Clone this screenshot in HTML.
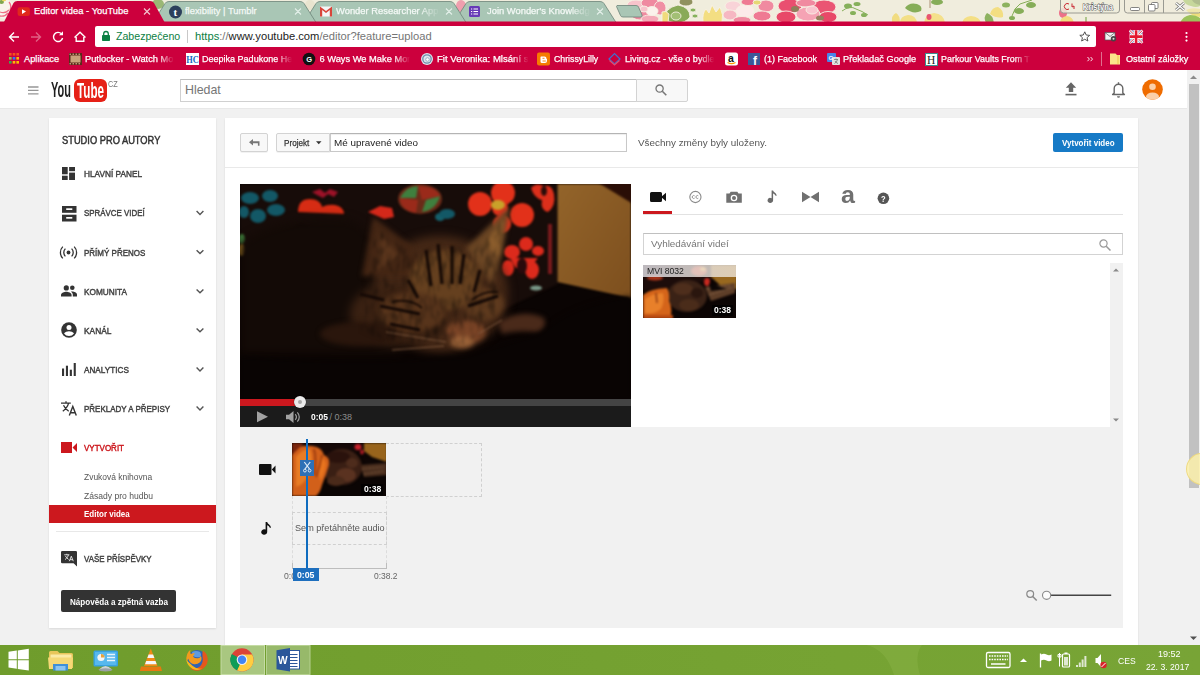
<!DOCTYPE html>
<html lang="cs"><head><meta charset="utf-8"><title>Editor videa - YouTube</title>
<style>
*{box-sizing:border-box;margin:0;padding:0}
html,body{width:1200px;height:675px;overflow:hidden;background:#f1f1f1}
body{font-family:"Liberation Sans","DejaVu Sans",sans-serif;position:relative;color:#333}
.abs{position:absolute}
svg{display:block;overflow:visible}
#chrome{left:0;top:0;width:1200px;height:70px;background:#cc003d;overflow:hidden}
.tabtxt{position:absolute;top:0;font-size:9.4px;line-height:21px;color:#fff;white-space:nowrap;overflow:hidden;-webkit-text-stroke:.25px currentColor}
.fade{-webkit-mask-image:linear-gradient(90deg,#000 80%,transparent);mask-image:linear-gradient(90deg,#000 80%,transparent)}
#omni{left:95px;top:26px;width:1001px;height:21px;background:#fff;border-radius:2px}
.bm{position:absolute;top:50px;height:17px;line-height:17px;font-size:9.2px;color:#fff;white-space:nowrap;overflow:hidden;-webkit-text-stroke:.25px #fff}
#page{left:0;top:70px;width:1187px;height:575px;background:#f1f1f1;overflow:hidden}
#ythead{left:0;top:0;width:1187px;height:39px;background:#fff;border-bottom:1px solid #e8e8e8}
#side{left:49px;top:48px;width:167px;height:509.5px;background:#fff;box-shadow:0 1px 2px rgba(0,0,0,.1)}
#main{left:224.500px;top:47.500px;width:913.500px;height:540px;background:#fff;box-shadow:0 1px 2px rgba(0,0,0,.1)}
#vscroll{left:1187px;top:70px;width:13px;height:575px;background:#f1f1f1}
#taskbar{left:0;top:645px;width:1200px;height:30px;background:#739f31}
.t{position:absolute;white-space:nowrap;transform-origin:0 50%}
.btn{border:1px solid #d3d3d3;background:#f8f8f8;border-radius:2px;box-shadow:0 1px 0 rgba(0,0,0,.05)}

</style></head><body>
<!-- ================= BROWSER CHROME ================= -->
<div id="chrome" class="abs">
<svg class="abs" style="left:0;top:0;overflow:hidden" width="1200" height="23" viewBox="0 0 1200 23">
  <defs><filter id="bl" x="-20%" y="-50%" width="140%" height="200%"><feGaussianBlur stdDeviation="0.6"/></filter></defs>
  <rect width="1200" height="23" fill="#f0eddd"/>
  <g filter="url(#bl)">
   <!-- left corner flower -->
   <ellipse cx="5" cy="9" rx="9" ry="10" fill="#f8f4ec"/><path d="M9 2q3 4 1 8M0 12q5 2 9-2M0 16q5 1 8-3" fill="none" stroke="#ee6f86" stroke-width="1.300"/><ellipse cx="1.500" cy="2" rx="2.500" ry="2" fill="#7fa650"/><ellipse cx="4" cy=".3" rx="2" ry="1" fill="#f0d860"/>
   <!-- between tabs -->
   <ellipse cx="158" cy="4" rx="6" ry="5" fill="#9ab774"/><ellipse cx="310" cy="5" rx="5" ry="5" fill="#e9e4cf"/><ellipse cx="461" cy="6" rx="5" ry="6" fill="#ef9fae"/>
   <!-- flowers right of tabs -->
   <g stroke="#f7f0e4" stroke-width=".9">
    <!-- pink flower 1 -->
    <ellipse cx="636" cy="5" rx="9" ry="5" fill="#f7c3cb"/><ellipse cx="650" cy="3" rx="9" ry="5" fill="#ef8aa0"/><ellipse cx="640" cy="14" rx="9" ry="6" fill="#ef8aa0"/><ellipse cx="660" cy="8" rx="6" ry="7" fill="#f08fa4"/><ellipse cx="650" cy="19" rx="9" ry="4" fill="#f4a9b7"/><ellipse cx="652" cy="11" rx="6" ry="4.500" fill="#fbf2ec"/><ellipse cx="644" cy="9" rx="4" ry="3" fill="#f7c3cb"/>
    <!-- leaves -->
    <ellipse cx="686" cy="2" rx="7" ry="4" fill="#90915f"/><path d="M664 20q0-12 14-15 12 2 12 12-4 6-14 6z" fill="#89aa59"/><path d="M662 12q4-2 7 2l-1 9h-6z" fill="#f0db7c"/><ellipse cx="676" cy="16" rx="5" ry="4" fill="#a3bf74"/><ellipse cx="693" cy="10" rx="3" ry="2" fill="#86b25c"/><ellipse cx="695" cy="16" rx="3" ry="2" fill="#86b25c"/>
    <!-- yellow tulip -->
    <path d="M703 22q-1-9 3-13l3 4 3-8 4 7 4-5q4 8 2 15z" fill="#f3de82"/>
    <!-- pink flower 2 -->
    <ellipse cx="733" cy="6" rx="8" ry="5" fill="#f9d3d8"/><ellipse cx="730" cy="15" rx="7" ry="5" fill="#f6b7c2"/><ellipse cx="745" cy="11" rx="9" ry="6" fill="#fcebe9"/><ellipse cx="742" cy="20" rx="9" ry="3.500" fill="#f08aa0"/><ellipse cx="748" cy="2" rx="7" ry="3.500" fill="#ef7a93"/><ellipse cx="766" cy="6" rx="8" ry="6" fill="#f08aa0"/><ellipse cx="762" cy="16" rx="9" ry="5" fill="#ef7a93"/><ellipse cx="757" cy="2.500" rx="4" ry="2.500" fill="#e6d874"/>
    <!-- rose -->
    <ellipse cx="790" cy="6" rx="12" ry="7" fill="#e9506f"/><ellipse cx="786" cy="17" rx="10" ry="6" fill="#e84868"/><ellipse cx="824" cy="7" rx="12" ry="7" fill="#ea5473"/><ellipse cx="828" cy="17" rx="9" ry="5.500" fill="#e84868"/><ellipse cx="806" cy="3" rx="10" ry="4" fill="#f08aa0"/><ellipse cx="808" cy="14" rx="12" ry="7" fill="#f5a3b4"/><ellipse cx="812" cy="10" rx="6" ry="4" fill="#f9c6cf"/>
   </g>
   <ellipse cx="795" cy="9" rx="4" ry="3" fill="#8f7f5c"/><ellipse cx="820" cy="18" rx="4" ry="2.500" fill="#96805e"/>
   <!-- sprig -->
   <path d="M842 11q8-6 14-2 6 2 12 6" fill="none" stroke="#86b05a" stroke-width="1"/><ellipse cx="848" cy="6" rx="4" ry="2.500" fill="#86b05a"/><ellipse cx="857" cy="4" rx="3.500" ry="2" fill="#86b05a"/><ellipse cx="853" cy="13" rx="3" ry="2" fill="#86b05a"/><ellipse cx="864" cy="15" rx="3" ry="2" fill="#86b05a"/>
   <path d="M892 23q-1-8 4-10 4 2 4 10z" fill="#f1dc80"/>
   <!-- right side -->
   <path d="M905 8q4-6 12-4 6 2 4 7-8 4-16-3z" fill="#86ad58"/><ellipse cx="937" cy="2" rx="6" ry="3" fill="#86ad58"/><path d="M930 0v8" stroke="#9a7a5a" stroke-width=".8"/>
   <path d="M900 23q0-7 8-8 8 0 9 8z" fill="#f3df86"/><path d="M924 23q1-9 10-10 10 1 11 10z" fill="#f4e08a"/><ellipse cx="929" cy="17" rx="2.500" ry="3" fill="#e8556f"/>
   <path d="M962 23q1-6 9-7 9 1 10 7z" fill="#f4df84"/><path d="M986 23q-3-6 1-10 6 2 7 10z" fill="#8db25f"/><path d="M990 14q2-7 8-7 6 3 5 10-6 2-13-3z" fill="#f3de82"/>
   <path d="M1012 16q2-8 8-12 6-2 12-4" fill="none" stroke="#86ad58" stroke-width="1"/><ellipse cx="1006" cy="5" rx="4" ry="2.500" fill="#8db25f"/><ellipse cx="1019" cy="11" rx="5" ry="3" fill="#86ad58"/><ellipse cx="1031" cy="5" rx="5" ry="3" fill="#86ad58"/><ellipse cx="1012" cy="18" rx="3" ry="2" fill="#86ad58"/>
   <ellipse cx="1063" cy="13" rx="4" ry="5" fill="#ee6f88"/><path d="M1060 23q0-6 7-7 6 1 7 7z" fill="#f2dc80"/><path d="M1086 23v-6" stroke="#86ad58" stroke-width="1.200"/>
   <path d="M1183 0q2 5 8 6 5 2 9 0V0z" fill="#9cc25a"/><path d="M1186 10q6-3 14-1v8q-8 0-14-7z" fill="#efe07c"/><path d="M1180 23q3-7 10-8 6 0 10 3v5z" fill="#9cc25a"/><path d="M1192 0q2 4 8 5V0z" fill="#6f8f3f"/>
  </g>
  <!-- user button + window controls -->
  <rect x="1060.5" y="-3" width="59" height="16" rx="3" fill="#efecdc" fill-opacity=".85" stroke="#9a9a92" stroke-width="1"/>
  <text x="1082.800" y="9.800" font-family="Liberation Sans, sans-serif" font-size="8.600" font-weight="bold" fill="#fff" stroke="#555" stroke-width="1" paint-order="stroke" textLength="30.200" lengthAdjust="spacingAndGlyphs">Kristýna</text>
  <path d="M1069 4a3 3 0 1 0 0 5M1072 3.5v3.5l2-1v3" fill="none" stroke="#c8242f" stroke-width="1"/>
  <rect x="1124.500" y="-3" width="77" height="16" rx="3" fill="#efecdc" fill-opacity=".5" stroke="#9a9a92" stroke-width="1"/>
  <path d="M1144.500 0V13M1163.500 0V13" stroke="#9a9a92" stroke-width="1"/>
  <rect x="1130.500" y="7.500" width="9" height="3" rx="1" fill="#fff" stroke="#666" stroke-width=".8"/>
  <rect x="1151.500" y="2.500" width="6.500" height="6" rx="1" fill="#fff" stroke="#666" stroke-width=".8"/><rect x="1148.500" y="4.500" width="6.500" height="6.500" rx="1" fill="#fff" stroke="#666" stroke-width=".8"/>
  <path d="M1176 3l8 7M1184 3l-8 7" stroke="#666" stroke-width="2.600"/><path d="M1176 3l8 7M1184 3l-8 7" stroke="#fff" stroke-width="1.300"/>
  <!-- inactive tabs -->
  <g stroke="#6c8478" stroke-width=".8" fill="#a9c6b5">
   <path d="M453 24L466 3.500Q467 1.500 470 1.500H600Q603 1.500 604 3.500L617 24"/>
   <path d="M303 24L316 3.500Q317 1.500 320 1.500H450Q453 1.500 454 3.500L467 24"/>
   <path d="M152 24L165 3.500Q166 1.500 169 1.500H300Q303 1.500 304 3.500L317 24"/>
   <path d="M617 5.500H636Q638 5.500 638.500 7L642 15Q642.500 17 641 17H623Q621 17 620.500 15.500L616.500 6.500Z"/>
  </g>
  <rect x="0" y="21.500" width="1200" height="2" fill="#cc003d"/>
  <!-- active tab -->
  <path d="M3.500 23L13.500 3Q14.500 1 17.500 1H150Q153 1 154 3L165 23Z" fill="#cc003d"/>
  <!-- favicons -->
  <rect x="17.600" y="7.200" width="12.300" height="8.800" rx="2.300" fill="#e0281c"/><path d="M22 9.300v4.600l4-2.300z" fill="#fff"/>
  <circle cx="175.500" cy="12" r="6.500" fill="#2c3f5c"/><text x="173.400" y="16" font-family="Liberation Serif, serif" font-weight="bold" font-size="11" fill="#fff">t</text>
  <path d="M320 6.500h12v10h-12z" fill="#f5f5f5"/><path d="M320 6.500v10h2.200v-6.500l3.800 3 3.800-3v6.500H332v-10l-6 4.600z" fill="#d9453a"/>
  <rect x="469" y="6" width="11" height="11" rx="1.500" fill="#673ab7"/><path d="M471 9h1.200M473.500 9h4.500M471 11.500h1.200M473.500 11.500h4.500M471 14h1.200M473.500 14h4.500" stroke="#fff" stroke-width="1.200"/>
  <!-- close x -->
  <g stroke="#f3c9d3" stroke-width="1.100" fill="none"><path d="M144 8.500l6 6M150 8.500l-6 6"/></g>
  <g stroke="#e3efe8" stroke-width="1.100" fill="none"><path d="M295 8.500l6 6M301 8.500l-6 6M446 8.500l6 6M452 8.500l-6 6M597 8.500l6 6M603 8.500l-6 6"/></g>
 </svg>
 <div class="tabtxt" style="left:34px;top:0px;width:108px">Editor videa - YouTube</div>
 <div class="tabtxt" style="left:185px;top:0px;width:108px;color:#f4f9f6">flexibility | Tumblr</div>
 <div class="tabtxt fade" style="left:336px;top:0px;width:104px;color:#f4f9f6">Wonder Researcher Appl</div>
 <div class="tabtxt fade" style="left:487px;top:0px;width:104px;color:#f4f9f6">Join Wonder's Knowledg</div>
  <!-- toolbar -->
 <svg class="abs" style="left:0;top:23px" width="95" height="27" viewBox="0 23 95 27">
  <g fill="none" stroke="#fff" stroke-width="1.4">
   <path d="M19 37H9.500M14 32.500L9.500 37l4.500 4.500"/>
   <path d="M31 37h9.500M36 32.500l4.500 4.500-4.500 4.500" stroke="#e05f83"/>
   <path d="M61.500 33.800A4.600 4.600 0 1 0 62.600 38"/>
   <path d="M74.500 37.500L80 32.300l5.500 5.200M76.200 37v4.300h7.600V37"/>
  </g>
  <path d="M63 31.300v4h-4z" fill="#fff"/>
 </svg>
 <div id="omni" class="abs">
  <svg class="abs" style="left:7px;top:5px" width="8" height="10" viewBox="0 0 8 10"><rect x="0" y="4" width="8" height="6" rx=".8" fill="#0b8043"/><path d="M1.700 4.500V2.800a2.300 2.300 0 0 1 4.600 0v1.700" fill="none" stroke="#0b8043" stroke-width="1.300"/></svg>
  <div class="abs" style="left:21px;top:0;line-height:21px;font-size:10.6px;color:#0b8043;white-space:nowrap">Zabezpečeno</div>
  <div class="abs" style="left:92px;top:4px;width:1px;height:13px;background:#c8c8c8"></div>
  <div class="abs" style="left:100px;top:0;line-height:21px;font-size:11.2px;color:#757575;white-space:nowrap"><span style="color:#0b8043">https</span>://<span style="color:#222">www.youtube.com</span>/editor?feature=upload</div>
  <svg class="abs" style="left:984px;top:5px" width="11.500" height="10.700" viewBox="0 0 14 13"><path d="M7 1l1.800 3.900 4.200.4-3.200 2.800 1 4.100L7 10l-3.800 2.200 1-4.100L1 5.300l4.200-.4z" fill="none" stroke="#444" stroke-width="1.100" stroke-linejoin="round"/></svg>
 </div>
 <!-- extension icons -->
 <svg class="abs" style="left:1103px;top:29px" width="90" height="16" viewBox="1103 29 90 16">
  <rect x="1105" y="32.500" width="10" height="7.500" fill="#f2f2f2" stroke="#555" stroke-width=".7"/><path d="M1105 32.500l5 4 5-4" fill="none" stroke="#555" stroke-width=".7"/><circle cx="1113.500" cy="38.800" r="2.700" fill="#444"/><circle cx="1113.500" cy="38.800" r="1" fill="#ddd"/>
  <rect x="1129.700" y="30.300" width="12.800" height="12.700" fill="#f4f4f8"/><path d="M1129.700 30.300l3 0 9.800 9.700v3l-3 0-9.800-9.700zM1142.500 30.300v3l-9.800 9.700h-3v-3l9.800-9.700z" fill="#3c5aa8" opacity=".55"/><path d="M1129.700 30.300l12.800 12.700M1142.500 30.300l-12.800 12.700" stroke="#fff" stroke-width="2.400"/><path d="M1129.700 30.300l12.800 12.700M1142.500 30.300l-12.800 12.700" stroke="#e0263c" stroke-width="1"/><path d="M1136.100 30.300v12.700M1129.700 36.650h12.800" stroke="#fff" stroke-width="4.200"/><path d="M1136.100 30.300v12.700M1129.700 36.650h12.800" stroke="#e3182f" stroke-width="2.600"/>
  <circle cx="1186.500" cy="33" r="1.100" fill="#fff"/><circle cx="1186.500" cy="36.800" r="1.100" fill="#fff"/><circle cx="1186.500" cy="40.600" r="1.100" fill="#fff"/>
 </svg>
 <!-- bookmarks bar -->
 <svg class="abs" style="left:0;top:50px" width="1200" height="18" viewBox="0 50 1200 18">
  <g><rect x="9" y="53" width="2.600" height="2.600" fill="#f4511e"/><rect x="12.700" y="53" width="2.600" height="2.600" fill="#f4511e"/><rect x="16.400" y="53" width="2.600" height="2.600" fill="#f4511e"/>
  <rect x="9" y="57" width="2.600" height="2.600" fill="#8bc34a"/><rect x="12.700" y="57" width="2.600" height="2.600" fill="#2979ff"/><rect x="16.400" y="57" width="2.600" height="2.600" fill="#fbbc05"/>
  <rect x="9" y="61" width="2.600" height="2.600" fill="#34a853"/><rect x="12.700" y="61" width="2.600" height="2.600" fill="#fbbc05"/><rect x="16.400" y="61" width="2.600" height="2.600" fill="#fbbc05"/></g>
  <rect x="69" y="53" width="13" height="12" fill="#5a2a1a"/><rect x="70.500" y="55.500" width="10" height="7" fill="#c9a27a"/><path d="M69.500 54.200h12M69.500 63.800h12" stroke="#e8c9a0" stroke-width="1" stroke-dasharray="1.500 1.500"/>
  <rect x="186" y="53" width="13" height="12" fill="#fff"/><text x="186.300" y="63.300" font-family="Liberation Serif, serif" font-weight="bold" font-size="11" fill="#1565c0" textLength="12.500" lengthAdjust="spacingAndGlyphs">HC</text>
  <circle cx="309" cy="59" r="6.300" fill="#111"/><text x="306.200" y="61.700" font-family="Liberation Sans, sans-serif" font-weight="bold" font-size="7.500" fill="#fff">G</text>
  <circle cx="427" cy="59" r="6" fill="#dfe7ee"/><circle cx="427" cy="59" r="4.200" fill="none" stroke="#6d8bab" stroke-width="1.300"/><circle cx="427.500" cy="59.500" r="1.800" fill="#fff" stroke="#8aa3bd" stroke-width=".8"/>
  <rect x="537" y="52.500" width="13" height="13" rx="2" fill="#f57c00"/><path d="M541 56.500h3.500a2 2 0 0 1 2 2v.5h.5v2a2 2 0 0 1-2 2H542a1.500 1.500 0 0 1-1.500-1.500V57z" fill="#fff"/><path d="M542.500 58.300h2M542.500 61h3.300" stroke="#f57c00" stroke-width=".9"/>
  <path d="M609 59l5.500-5.500 5.500 5.500-5.500 5z" fill="none" stroke="#3f6fd1" stroke-width="1.200"/><path d="M609.500 60.500l5 4.500 5-4.500" fill="none" stroke="#e4486a" stroke-width="1.300"/>
  <rect x="725" y="52.500" width="13" height="13" rx="2.500" fill="#fff"/><text x="728" y="61.800" font-family="Liberation Sans, sans-serif" font-weight="bold" font-size="10.500" fill="#111">a</text><path d="M727.500 62.500q4 2.200 8 0" fill="none" stroke="#f90" stroke-width="1.100"/>
  <rect x="748" y="53" width="12" height="12" fill="#3b5998"/><text x="753" y="65" font-family="Liberation Sans, sans-serif" font-weight="bold" font-size="12" fill="#fff">f</text>
  <rect x="827" y="53" width="9" height="9" rx="1" fill="#4a86e8"/><rect x="832" y="57" width="8" height="8" rx="1" fill="#e2e2e2"/><text x="828.500" y="60" font-family="Liberation Sans, sans-serif" font-weight="bold" font-size="6" fill="#fff">G</text><path d="M834 59.500h4M836 58.500v1M834.500 63.500q2.500-1.500 3-4M835 61q1 1.800 3 2.500" fill="none" stroke="#666" stroke-width=".7"/>
  <rect x="925.500" y="53.500" width="12" height="12" fill="#fff" stroke="#3a8f8f" stroke-width="1"/><text x="927" y="63.500" font-family="Liberation Serif, serif" font-size="11.500" fill="#222">H</text>
  <path d="M1087.500 57l1.900 2.100-1.900 2.100M1090.600 57l1.900 2.100-1.900 2.100" fill="none" stroke="#fff" stroke-width=".9"/>
  <rect x="1101" y="52" width="1" height="14" fill="#e0708f"/>
  <path d="M1110 53.500h5.500l1.500 1.500h3v9.500h-10z" fill="#fce38a"/><path d="M1118 55v9" stroke="#f5d36a" stroke-width="2"/>
 </svg>
 <div class="t" style="left:24px;top:52px;font-size:9.3px;line-height:14px;color:#fff;-webkit-text-stroke:.25px #fff;">Aplikace</div>

 <div class="t" style="left:85px;top:52px;font-size:9.3px;line-height:14px;color:#fff;-webkit-text-stroke:.25px #fff;-webkit-mask-image:linear-gradient(90deg,#000 82%,transparent 100%);mask-image:linear-gradient(90deg,#000 82%,transparent 100%);">Putlocker - Watch Mo</div>

 <div class="t" style="left:202px;top:52px;font-size:9.3px;line-height:14px;color:#fff;transform:scaleX(0.97);-webkit-text-stroke:.25px #fff;-webkit-mask-image:linear-gradient(90deg,#000 82%,transparent 100%);mask-image:linear-gradient(90deg,#000 82%,transparent 100%);">Deepika Padukone He</div>

 <div class="t" style="left:319.5px;top:52px;font-size:9.3px;line-height:14px;color:#fff;-webkit-text-stroke:.25px #fff;-webkit-mask-image:linear-gradient(90deg,#000 82%,transparent 100%);mask-image:linear-gradient(90deg,#000 82%,transparent 100%);">6 Ways We Make Mor</div>

 <div class="t" style="left:436.5px;top:52px;font-size:9.3px;line-height:14px;color:#fff;transform:scaleX(1.03);-webkit-text-stroke:.25px #fff;-webkit-mask-image:linear-gradient(90deg,#000 82%,transparent 100%);mask-image:linear-gradient(90deg,#000 82%,transparent 100%);">Fit Veronika: Mlsání s</div>

 <div class="t" style="left:554px;top:52px;font-size:9.3px;line-height:14px;color:#fff;transform:scaleX(0.94);-webkit-text-stroke:.25px #fff;">ChrissyLilly</div>

 <div class="t" style="left:625px;top:52px;font-size:9.3px;line-height:14px;color:#fff;transform:scaleX(0.98);-webkit-text-stroke:.25px #fff;-webkit-mask-image:linear-gradient(90deg,#000 82%,transparent 100%);mask-image:linear-gradient(90deg,#000 82%,transparent 100%);">Living.cz - vše o bydle</div>

 <div class="t" style="left:764px;top:52px;font-size:9.3px;line-height:14px;color:#fff;transform:scaleX(0.97);-webkit-text-stroke:.25px #fff;">(1) Facebook</div>

 <div class="t" style="left:843px;top:52px;font-size:9.3px;line-height:14px;color:#fff;transform:scaleX(0.99);-webkit-text-stroke:.25px #fff;">Překladač Google</div>

 <div class="t" style="left:941px;top:52px;font-size:9.3px;line-height:14px;color:#fff;transform:scaleX(0.96);-webkit-text-stroke:.25px #fff;-webkit-mask-image:linear-gradient(90deg,#000 82%,transparent 100%);mask-image:linear-gradient(90deg,#000 82%,transparent 100%);">Parkour Vaults From T</div>

 <div class="t" style="left:1126px;top:52px;font-size:9.3px;line-height:14px;color:#fff;transform:scaleX(0.98);-webkit-text-stroke:.25px #fff;">Ostatní záložky</div>


</div>
<!-- ================= PAGE ================= -->
<div id="page" class="abs">
<div id="ythead" class="abs">
 <!-- hamburger -->
 <svg class="abs" style="left:27.500px;top:15.500px" width="10.500" height="9" viewBox="0 0 10.500 9"><path d="M0 1h10.500M0 4.400h10.500M0 7.800h10.500" stroke="#969696" stroke-width="1.300"/></svg>
 <!-- logo -->
 <div class="abs" style="left:74px;top:8.700px;width:32.700px;height:23.200px;border-radius:6px;background:#e62117"></div>
 <div class="t" style="left:51px;top:6px;font-size:21.5px;line-height:28px;font-weight:bold;color:#1f1f1f;transform:scaleX(0.51);">You</div>

 <div class="t" style="left:76.8px;top:6px;font-size:22px;line-height:29px;font-weight:bold;color:#fff;transform:scaleX(0.53);">Tube</div>

 <div class="t" style="left:108px;top:7px;font-size:8.5px;line-height:14px;color:#777;transform:scaleX(0.86);">CZ</div>

 <!-- search -->
 <div class="abs" style="left:180px;top:9px;width:457px;height:23px;border:1px solid #d0d0d0;border-top-color:#bdbdbd;background:#fff"></div>
 <div class="abs" style="left:636px;top:9px;width:52px;height:23px;border:1px solid #d3d3d3;background:#f8f8f8;border-radius:0 2px 2px 0"></div>
 <div class="t" style="left:185px;top:11px;font-size:12.4px;line-height:18px;color:#767676;">Hledat</div>

 <svg class="abs" style="left:655px;top:14px" width="12" height="12" viewBox="0 0 12 12"><circle cx="4.600" cy="4.600" r="3.600" fill="none" stroke="#777" stroke-width="1.300"/><path d="M7.300 7.300l4 4" stroke="#777" stroke-width="1.600"/></svg>
 <!-- upload -->
 <svg class="abs" style="left:1065px;top:12px" width="12" height="14" viewBox="0 0 12 14"><path d="M6 .3L11.200 5.800H8.200V10H3.800V5.800H.8z" fill="#666"/><rect x=".5" y="11.800" width="11" height="1.600" fill="#666"/></svg>
 <!-- bell -->
 <svg class="abs" style="left:1111px;top:11px" width="15" height="17" viewBox="0 0 15 17"><path d="M7.500 1.200v1.200M3.200 12V7.600a4.300 4.300 0 0 1 8.600 0V12l1.600 1.500H1.600z" fill="none" stroke="#666" stroke-width="1.400" stroke-linejoin="round"/><path d="M6 15.200h3a1.500 1.500 0 0 1-3 0z" fill="#666"/></svg>
 <!-- avatar -->
 <svg class="abs" style="left:1142px;top:9px" width="21" height="21" viewBox="0 0 21 21"><defs><clipPath id="av"><circle cx="10.500" cy="10.500" r="10.300"/></clipPath></defs><circle cx="10.500" cy="10.500" r="10.300" fill="#ef6c00"/><g clip-path="url(#av)" fill="#fbd0a8"><circle cx="10.500" cy="7.800" r="3.300"/><ellipse cx="10.500" cy="18.200" rx="6.600" ry="4.800"/></g></svg>
</div>
<div id="side" class="abs"></div>
<div id="sidec" class="abs" style="left:0;top:-70px;width:230px;height:720px">
 <div class="t" style="left:62px;top:133px;font-size:10px;line-height:15px;color:#333;transform:scaleX(0.93);-webkit-text-stroke:.45px currentColor;">STUDIO PRO AUTORY</div>

 <!-- dashboard icon -->
 <svg class="abs" style="left:62px;top:167px" width="13" height="13" viewBox="0 0 13 13" fill="#333"><rect x="0" y="0" width="5.700" height="7.300"/><rect x="7.100" y="0" width="5.900" height="4.200"/><rect x="0" y="8.700" width="5.700" height="4.300"/><rect x="7.100" y="5.600" width="5.900" height="7.400"/></svg>
 <div class="t" style="left:83.6px;top:167px;font-size:9.3px;line-height:14px;color:#444;transform:scaleX(0.89);-webkit-text-stroke:.45px currentColor;">HLAVNÍ PANEL</div>

 <!-- video manager icon -->
 <svg class="abs" style="left:61.500px;top:205.500px" width="14.500" height="15.500" viewBox="0 0 14.500 15.500"><rect x="0" y="0" width="14.500" height="6.800" fill="#333"/><rect x="0" y="8.700" width="14.500" height="6.800" fill="#333"/><rect x="4.200" y="2.300" width="6.100" height="1.700" fill="#fff"/><rect x="4.200" y="11" width="6.100" height="1.700" fill="#fff"/></svg>
 <div class="t" style="left:83.6px;top:206px;font-size:9.3px;line-height:14px;color:#444;transform:scaleX(0.85);-webkit-text-stroke:.45px currentColor;">SPRÁVCE VIDEÍ</div>

 <!-- live icon -->
 <svg class="abs" style="left:60px;top:245.500px" width="17" height="13" viewBox="0 0 17 13"><circle cx="8.500" cy="6.500" r="1.900" fill="#333"/><path d="M5.400 2.600a5.500 5.500 0 0 0 0 7.800M11.600 2.600a5.500 5.500 0 0 1 0 7.800M2.800 .6a8.500 8.500 0 0 0 0 11.800M14.200 .6a8.500 8.500 0 0 1 0 11.800" fill="none" stroke="#333" stroke-width="1.300"/></svg>
 <div class="t" style="left:83.6px;top:246px;font-size:9.3px;line-height:14px;color:#444;transform:scaleX(0.86);-webkit-text-stroke:.45px currentColor;">PŘÍMÝ PŘENOS</div>

 <!-- community icon -->
 <svg class="abs" style="left:60.500px;top:285px" width="16" height="12" viewBox="0 0 16 12" fill="#333"><circle cx="5.300" cy="2.900" r="2.600"/><circle cx="11.300" cy="2.700" r="2.300"/><path d="M0 11.500V10c0-2 3.500-3.200 5.300-3.200S10.600 8 10.600 10v1.500z"/><path d="M11.800 11.500V9.800c0-1.300-.8-2.300-1.900-3 .5-.1 1-.2 1.400-.2 1.800 0 4.700 1.100 4.700 3v1.900z"/></svg>
 <div class="t" style="left:83.6px;top:285px;font-size:9.3px;line-height:14px;color:#444;transform:scaleX(0.89);-webkit-text-stroke:.45px currentColor;">KOMUNITA</div>

 <!-- channel icon -->
 <svg class="abs" style="left:60.500px;top:322px" width="16" height="16" viewBox="0 0 16 16"><circle cx="8" cy="8" r="7.800" fill="#333"/><circle cx="8" cy="5.600" r="2.500" fill="#fff"/><path d="M3 11.500c1-1.600 3.200-2.300 5-2.300s4 .7 5 2.300a6.200 6.200 0 0 1-10 0z" fill="#fff"/></svg>
 <div class="t" style="left:83.6px;top:324px;font-size:9.3px;line-height:14px;color:#444;transform:scaleX(0.9);-webkit-text-stroke:.45px currentColor;">KANÁL</div>

 <!-- analytics icon -->
 <svg class="abs" style="left:62px;top:363px" width="14" height="13" viewBox="0 0 14 13" fill="#333"><rect x="0" y="5.500" width="2.100" height="7.500"/><rect x="3.900" y="2.700" width="2.100" height="10.300"/><rect x="7.800" y="6.700" width="2.100" height="6.300"/><rect x="11.700" y="0" width="2.100" height="13"/></svg>
 <div class="t" style="left:83.6px;top:363px;font-size:9.3px;line-height:14px;color:#444;transform:scaleX(0.88);-webkit-text-stroke:.45px currentColor;">ANALYTICS</div>

 <!-- translate icon -->
 <svg class="abs" style="left:60.500px;top:401px" width="16" height="14.500" viewBox="0 0 16 14.500"><path d="M0 2.200h9.800M5 .2v2M1.800 10.300C5 7.800 6.900 5 7.600 2.200M2.500 4.200c1 2.300 2.800 4.300 5.200 6" fill="none" stroke="#333" stroke-width="1.300"/><path d="M8.300 14.500l3.500-9 3.500 9M9.600 11.700h4.400" fill="none" stroke="#333" stroke-width="1.400"/></svg>
 <div class="t" style="left:83.6px;top:402px;font-size:9.3px;line-height:14px;color:#444;transform:scaleX(0.86);-webkit-text-stroke:.45px currentColor;">PŘEKLADY A PŘEPISY</div>

 <!-- create icon -->
 <svg class="abs" style="left:60.500px;top:442px" width="16" height="11" viewBox="0 0 16 11"><path d="M0 0h11v11H0zM11.500 5.500L16 1v9z" fill="#cc181e"/></svg>
 <div class="t" style="left:83.6px;top:441px;font-size:9.3px;line-height:14px;color:#cc181e;transform:scaleX(0.86);-webkit-text-stroke:.45px currentColor;">VYTVOŘIT</div>

 <div class="t" style="left:83.6px;top:469px;font-size:9.5px;line-height:15px;color:#555;transform:scaleX(0.89);">Zvuková knihovna</div>

 <div class="t" style="left:83.6px;top:488px;font-size:9.5px;line-height:15px;color:#555;transform:scaleX(0.9);">Zásady pro hudbu</div>

 <div class="abs" style="left:49px;top:504.500px;width:167px;height:18.500px;background:#cc181e"></div>
 <div class="t" style="left:83.6px;top:506px;font-size:9.5px;line-height:15px;font-weight:bold;color:#fff;transform:scaleX(0.84);">Editor videa</div>

 <div class="abs" style="left:56px;top:531px;width:153px;height:1px;background:#e8e8e8"></div>
 <!-- contributions icon -->
 <svg class="abs" style="left:60.500px;top:550.500px" width="16" height="15.500" viewBox="0 0 16 15.500"><path d="M1.200 0h13.600Q16 0 16 1.200V15.500L12.600 12.200H1.200Q0 12.200 0 11V1.200Q0 0 1.200 0z" fill="#333"/><path d="M3.200 3.800h5.200M5.800 2.800v1M4 8.600c2-1.400 3-3 3.400-4.800M4.400 5c.7 1.400 1.800 2.500 3.200 3.400M8.300 10.200l2-5 2 5M9 8.700h2.600" fill="none" stroke="#fff" stroke-width=".8"/></svg>
 <div class="t" style="left:83.6px;top:552px;font-size:9.3px;line-height:14px;color:#444;transform:scaleX(0.85);-webkit-text-stroke:.45px currentColor;">VAŠE PŘÍSPĚVKY</div>

 <div class="abs" style="left:61px;top:590px;width:115px;height:22px;border-radius:2px;background:#333"></div>
 <div class="t" style="left:69.7px;top:595px;font-size:9.3px;line-height:14px;font-weight:bold;color:#fff;transform:scaleX(0.87);">Nápověda a zpětná vazba</div>

 <!-- chevrons -->
 <svg class="abs" style="left:195.500px;top:205px" width="8" height="210" viewBox="0 0 8 210" fill="none" stroke="#555" stroke-width="1.400"><path d="M.6 6l3.400 3.400L7.400 6M.6 45.200l3.400 3.400 3.400-3.400M.6 84.400l3.400 3.400 3.400-3.400M.6 123.400l3.400 3.400 3.400-3.400M.6 162.600l3.400 3.400 3.400-3.400M.6 201.600l3.400 3.400 3.400-3.400"/></svg>
</div>
<div id="main" class="abs"></div>
<div id="mainc" class="abs" style="left:0;top:-70px;width:1187px;height:720px">
 <!-- top row -->
 <div class="abs btn" style="left:240px;top:133px;width:27.500px;height:18.500px"></div>
 <svg class="abs" style="left:248.500px;top:138.500px" width="11" height="8" viewBox="0 0 11 8"><path d="M0 3.200L4 0v2.200h6.500v4.600H8.900V4.200H4v2.200z" fill="#777"/></svg>
 <div class="abs btn" style="left:275.500px;top:133px;width:54.500px;height:18.500px;border-radius:2px 0 0 2px"></div>
 <div class="t" style="left:284px;top:135px;font-size:9.6px;line-height:15px;font-weight:bold;color:#333;transform:scaleX(0.85);font-weight:normal;-webkit-text-stroke:.25px #333;">Projekt</div>

 <svg class="abs" style="left:315.500px;top:140.500px" width="5.500" height="3.500" viewBox="0 0 6 3.500"><path d="M0 0h6L3 3.500z" fill="#333"/></svg>
 <div class="abs" style="left:329.500px;top:133px;width:297px;height:18.500px;border:1px solid #c8c8c8;border-top-color:#b4b4b4;background:#fff;box-shadow:inset 0 1px 1px rgba(0,0,0,.07)"></div>
 <div class="t" style="left:333.8px;top:135px;font-size:9.7px;line-height:15px;color:#222;transform:scaleX(1.02);">Mé upravené video</div>

 <div class="t" style="left:638.4px;top:135px;font-size:9.7px;line-height:15px;color:#555;transform:scaleX(1.02);">Všechny změny byly uloženy.</div>

 <div class="abs" style="left:1053px;top:133px;width:69.500px;height:18.500px;border-radius:2px;background:#167ac6"></div>
 <div class="t" style="left:1062px;top:136px;font-size:9.3px;line-height:14px;font-weight:bold;color:#fff;transform:scaleX(0.86);">Vytvořit video</div>

 <div class="abs" style="left:225px;top:166.500px;width:913px;height:1px;background:#e9e9e9"></div>
 <!-- VIDEO -->
 <div class="abs" style="left:240px;top:183.500px;width:391px;height:243px;background:#0a0505;overflow:hidden">
  <svg class="abs" style="left:0;top:0" width="391" height="217" viewBox="0 0 391 217">
   <defs><filter id="vb" x="-30%" y="-30%" width="160%" height="160%" color-interpolation-filters="sRGB"><feGaussianBlur stdDeviation="5"/></filter><filter id="vb2" x="-30%" y="-30%" width="160%" height="160%" color-interpolation-filters="sRGB"><feGaussianBlur stdDeviation="1.300"/></filter><filter id="vb3" x="-30%" y="-30%" width="160%" height="160%" color-interpolation-filters="sRGB"><feGaussianBlur stdDeviation="2.500"/></filter>
   <linearGradient id="wall" x1="0" y1="0" x2="1" y2="1"><stop offset="0" stop-color="#93642a"/><stop offset="1" stop-color="#7d4f1e"/></linearGradient></defs>
   <rect width="391" height="217" fill="#0a0403"/>
   <!-- pillow fabric -->
   <path d="M0 0H318V100L262 126 160 60 60 40 0 70z" fill="#170c09" filter="url(#vb2)"/>
   <!-- tan wall -->
   <path d="M317.500 0H391V114L317.500 98z" fill="url(#wall)" filter="url(#vb2)"/><path d="M357 -2h36v22z" fill="#2a0e06" filter="url(#vb2)"/>
   <g filter="url(#vb2)">
    <!-- teal flower -->
    <g fill="#135866"><ellipse cx="10" cy="14" rx="9" ry="6"/><ellipse cx="30" cy="12" rx="8" ry="6"/><ellipse cx="36" cy="26" rx="9" ry="6"/><ellipse cx="18" cy="32" rx="8" ry="7"/><ellipse cx="4" cy="28" rx="5" ry="6"/></g>
    <ellipse cx="2" cy="55" rx="3" ry="5" fill="#3d7a3a"/><ellipse cx="2" cy="66" rx="3" ry="6" fill="#b88a28"/>
    <!-- red bumps -->
    <path d="M58 28Q58 15 70 15 80 15 82 23 88 20 95 21 104 23 104 30z" fill="#d62c14"/>
    <path d="M72 8l8-3 5 4 5-4 8 3-4 5-6-3-5 4-6-3z" fill="#9c1228"/>
    <path d="M128 28l12-6 12 2 2 9-10 2z" fill="#d4281a"/>
    <!-- green/red ball -->
    <ellipse cx="180" cy="15" rx="22" ry="15" fill="#6a2a18"/><path d="M160 14Q166 2 178 2L176 14zM182 28Q196 26 200 12L186 16z" fill="#3f7f3e"/><path d="M178 2Q196 2 200 12L182 16zM160 14Q160 26 176 29L178 16z" fill="#9a2a1a"/>
    <ellipse cx="200" cy="33" rx="5" ry="4" fill="#155f6a"/><ellipse cx="207" cy="30" rx="8" ry="5" fill="#135866"/>
    <!-- red flower 1 -->
    <g fill="#e2311a"><circle cx="240" cy="20" r="12"/><circle cx="263" cy="9" r="12"/><circle cx="282" cy="31" r="12"/><circle cx="262" cy="40" r="9"/><circle cx="260" cy="24" r="8"/></g><ellipse cx="258" cy="21" rx="7" ry="5" fill="#c9a12a"/>
    <!-- red flower 2 -->
    <path d="M291 4Q296 -2 304 2 312 0 314 10 316 22 308 28 300 26 302 16 294 14 291 4z" fill="#dc2f1b"/><ellipse cx="304" cy="7" rx="3" ry="5" fill="#2a0d0a"/>
    <!-- red flower 3 -->
    <g fill="#dc2a1c"><ellipse cx="272" cy="68" rx="8" ry="7"/><ellipse cx="286" cy="60" rx="7" ry="7"/><ellipse cx="298" cy="67" rx="6" ry="5"/><ellipse cx="268" cy="84" rx="6" ry="8"/><ellipse cx="292" cy="86" rx="7" ry="9"/><path d="M270 74h28l-8 10h-14z"/></g><ellipse cx="282" cy="82" rx="5" ry="8" fill="#2a0a0c"/>
    <path d="M310 40v50" stroke="#7a1a1c" stroke-width="4"/>
    <ellipse cx="296" cy="104" rx="6" ry="2.500" fill="#7a9a8a"/>
   </g>
   <!-- cat body (very dark) -->
   <g filter="url(#vb)">
    <path d="M0 60Q40 30 110 36 150 50 160 170H0z" fill="#130a06"/>
    <ellipse cx="200" cy="110" rx="68" ry="58" fill="#452816"/>
    <ellipse cx="160" cy="130" rx="50" ry="32" fill="#3a2112"/>
   </g>
   <g filter="url(#vb3)">
    <path d="M122 92L133 33 172 62 178 92z" fill="#442614"/><path d="M140 50l20 22-22 14z" fill="#5a351c"/>
    <path d="M226 64L270 22 262 70 252 100z" fill="#6b4624"/><path d="M244 60l20-26-4 40z" fill="#8a5c2c"/>
    <ellipse cx="205" cy="96" rx="36" ry="30" fill="#65401f"/>
    <ellipse cx="172" cy="128" rx="34" ry="20" fill="#57341b"/>
    <ellipse cx="244" cy="120" rx="20" ry="16" fill="#5e3a1e"/>
    <ellipse cx="226" cy="148" rx="20" ry="12" fill="#7a4426"/><ellipse cx="222" cy="158" rx="12" ry="6" fill="#9a6238"/>
    <path d="M258 138Q282 124 304 134 308 146 296 148 276 146 262 150z" fill="#4a2a1a"/>
    <ellipse cx="120" cy="150" rx="40" ry="12" fill="#2a160c"/>
   </g>
   <g filter="url(#vb2)" fill="none" stroke="#160a06" stroke-width="3.200"><path d="M186 66l5 36M198 60l4 40M212 62l0 38M224 70l-4 30M168 96l10 18M240 86l-6 22M140 122l40 8M228 122l30-10M150 140l30 6M120 110l24 6"/></g>
   <g filter="url(#vb2)" fill="none" stroke="#1a0c06" stroke-width="2"><path d="M152 118q18 -4 30 6M232 116q12 -10 26 -8"/></g>
   <g filter="url(#vb2)" fill="none" stroke="#8a6244" stroke-width=".9"><path d="M206 158l-60 -10M204 162l-52 4M238 150l24 -14"/></g>
   <!-- fur texture -->
   <filter id="fur" x="0" y="0" width="100%" height="100%" color-interpolation-filters="sRGB"><feTurbulence type="fractalNoise" baseFrequency=".16 .07" numOctaves="2" seed="11" result="n"/><feColorMatrix in="n" type="matrix" values="0 0 0 0 0  0 0 0 0 0  0 0 0 0 0  2.200 0 0 0 -.95"/><feGaussianBlur stdDeviation="1"/></filter>
   <mask id="headmask"><path d="M126 100L136 44 172 70Q205 58 232 68L264 34 258 96Q266 128 246 146 226 166 196 158 156 162 122 146z" fill="#fff" filter="url(#vb3)"/></mask>
   <g mask="url(#headmask)"><rect x="100" y="20" width="190" height="160" fill="#140906" filter="url(#fur)" opacity=".42"/></g>
   <!-- sofa dark bottom -->
   <path d="M0 172Q120 182 226 172 262 160 300 150 330 120 391 112V217H0z" fill="#090403" filter="url(#vb3)"/>
  </svg>
  <!-- progress -->
  <div class="abs" style="left:0;top:215.500px;width:391px;height:6.500px;background:#444"></div>
  <div class="abs" style="left:0;top:215.500px;width:59px;height:6.500px;background:#cc181e"></div>
  <div class="abs" style="left:0;top:222px;width:391px;height:21px;background:#1b1b1b"></div>
  <div class="abs" style="left:53.500px;top:212px;width:12.500px;height:12.500px;border-radius:50%;background:#ebebeb;box-shadow:0 0 1px #000"></div>
  <div class="abs" style="left:57.700px;top:216.200px;width:4px;height:4px;border-radius:50%;background:#aaa"></div>
  <svg class="abs" style="left:17px;top:227px" width="11" height="11.500" viewBox="0 0 12 12"><path d="M0 0l12 6L0 12z" fill="#a2a2a2"/></svg>
  <svg class="abs" style="left:46px;top:227px" width="15" height="12" viewBox="0 0 15 12"><path d="M0 3.800h3L7.500 0v12L3 8.200H0z" fill="#a2a2a2"/><path d="M9.200 3.300a3.600 3.600 0 0 1 0 5.400M11.300 1.400a6.400 6.400 0 0 1 0 9.200" fill="none" stroke="#a2a2a2" stroke-width="1.200"/></svg>
 </div>
 <div class="t" style="left:310.7px;top:410px;font-size:9px;line-height:14px;font-weight:bold;color:#fff;transform:scaleX(0.94);">0:05</div>

 <div class="t" style="left:329.5px;top:410px;font-size:9px;line-height:14px;color:#8c8c8c;">/ 0:38</div>

 <!-- right panel tabs -->
 <svg class="abs" style="left:642px;top:186px" width="250" height="22" viewBox="642 186 250 22">
  <path d="M650 193.500Q650 192 651.500 192h9Q662 192 662 193.500v7Q662 202 660.500 202h-9Q650 202 650 200.500zM661 197l5-4.300v8.600z" fill="#111"/>
  <circle cx="695.400" cy="197" r="5.600" fill="none" stroke="#8a8a8a" stroke-width="1.100"/><path d="M694.600 195.800a1.500 1.500 0 1 0 0 2.400M698.300 195.800a1.500 1.500 0 1 0 0 2.400" fill="none" stroke="#8a8a8a" stroke-width=".9"/>
  <path d="M726.300 193.500h3.200l1.200-1.800h6.600l1.200 1.800h3.300v9.300h-15.500z" fill="#707070"/><circle cx="734" cy="198" r="3.300" fill="#fff"/><circle cx="734" cy="198" r="2" fill="#707070"/>
  <path d="M771.600 190.500h1.500c.5 2 3.300 2.400 3.600 5.300h-1.100c-.6-1.600-1.700-2.200-2.500-2.400v7a2.800 2.500 0 1 1-1.500-2.200z" fill="#6a6a6a"/>
  <path d="M802 191.800l8.500 5.200 8.500-5.200v10.400l-8.500-5.200-8.500 5.200z" fill="#707070"/>
  <circle cx="883.400" cy="198.300" r="5.800" fill="#555"/>
 </svg>
 <div class="t" style="left:841.4px;top:180px;font-size:23px;line-height:30px;font-weight:bold;color:#707070;transform:scaleX(1.09);">a</div>

 <div class="t" style="left:881.2px;top:192px;font-size:8.5px;line-height:14px;font-weight:bold;color:#fff;transform:scaleX(0.89);">?</div>

 <div class="abs" style="left:642.500px;top:213.500px;width:480px;height:1px;background:#e2e2e2"></div>
 <div class="abs" style="left:642.500px;top:210.500px;width:29.500px;height:3.500px;background:#cc181e"></div>
 <div class="abs" style="left:642.500px;top:233px;width:480px;height:21.500px;border:1px solid #d3d3d3;border-top-color:#c0c0c0;background:#fff"></div>
 <div class="t" style="left:651.4px;top:236px;font-size:9.7px;line-height:15px;color:#767676;transform:scaleX(1.02);">Vyhledávání videí</div>

 <svg class="abs" style="left:1098.500px;top:238.500px" width="12" height="12" viewBox="0 0 12 12"><circle cx="4.500" cy="4.500" r="3.600" fill="none" stroke="#999" stroke-width="1.200"/><path d="M7.200 7.200l4.300 4.300" stroke="#999" stroke-width="1.500"/></svg>
 <!-- thumb -->
 <div class="abs" style="left:642.500px;top:264.500px;width:93.500px;height:53.500px;background:#1c0c06;overflow:hidden">
  <svg class="abs" style="left:0;top:0" width="94" height="54" viewBox="0 0 94 54"><defs><filter id="tb" x="-30%" y="-30%" width="160%" height="160%" color-interpolation-filters="sRGB"><feGaussianBlur stdDeviation="1.100"/></filter></defs>
   <rect width="94" height="54" fill="#0c0504"/>
   <g filter="url(#tb)">
    <path d="M0 0h70v14L40 22 0 26z" fill="#1c0c0a"/>
    <ellipse cx="56" cy="6" rx="8" ry="5" fill="#c8301a"/><ellipse cx="60" cy="4" rx="3" ry="2" fill="#e8a030"/><ellipse cx="12" cy="13" rx="8" ry="2.500" fill="#a8341a"/><ellipse cx="64" cy="17" rx="3" ry="4" fill="#c82a20"/>
    <path d="M68 0h26v24L78 21 68 12z" fill="#98681f"/>
    <path d="M62 22L92 18v10L68 36z" fill="#5e3e28"/><path d="M64 24l24-4M66 30l24-8" stroke="#8a664a" stroke-width="1.200" stroke-dasharray="2 1.500"/>
    <path d="M66 18l18 6-16 2z" fill="#0c0605"/>
    <ellipse cx="44" cy="31" rx="20" ry="16" fill="#3a2216"/><ellipse cx="40" cy="24" rx="10" ry="6" fill="#4e2e1c"/><ellipse cx="46" cy="40" rx="10" ry="6" fill="#4a2c1a"/><ellipse cx="54" cy="28" rx="6" ry="5" fill="#2a160e"/>
    <path d="M0 30Q6 24 24 23 27 28 26 36 30 44 27 54H0z" fill="#d4641a"/><path d="M2 34q8-6 18-6 2 8-2 16-8 6-16 4z" fill="#e8802a"/><path d="M13 28l1 10" stroke="#7a2a0c" stroke-width="1.200"/><path d="M0 50h30v4H0z" fill="#b84a12"/>
   </g>
  </svg>
  <div class="abs" style="left:0;top:0;width:94px;height:12px;background:linear-gradient(90deg,rgba(226,224,230,.82),rgba(238,230,218,.8))"></div><div class="abs" style="left:69.500px;top:40px;width:21px;height:11px;background:rgba(0,0,0,.7)"></div>
 </div>
 <div class="t" style="left:647px;top:264px;font-size:8.8px;line-height:14px;color:#222;transform:scaleX(0.98);">MVI 8032</div>

 <div class="t" style="left:714px;top:303px;font-size:8.8px;line-height:14px;font-weight:bold;color:#fff;transform:scaleX(0.97);">0:38</div>

 <!-- list scrollbar -->
 <div class="abs" style="left:1109.500px;top:262.500px;width:13px;height:164px;background:#f1f1f1"></div>
 <svg class="abs" style="left:1113px;top:268px" width="6" height="154" viewBox="0 0 6 154"><path d="M0 3.500L3 .5l3 3zM0 150.500l3 3 3-3z" fill="#8a8a8a"/></svg>
 <!-- TIMELINE -->
 <div class="abs" style="left:240px;top:426.500px;width:882.500px;height:201px;background:#f1f1f1"></div>
 <svg class="abs" style="left:258.500px;top:464px" width="16.500" height="11" viewBox="0 0 16.500 11"><path d="M0 1Q0 0 1 0h10.500Q12.500 0 12.500 1v9Q12.500 11 11.500 11H1Q0 11 0 10zM12.800 5.500L16.500 1.500v8z" fill="#111"/></svg>
 <div class="abs" style="left:291.500px;top:443px;width:94.500px;height:53px;background:#180805;overflow:hidden">
  <svg class="abs" style="left:0;top:0" width="95" height="53" viewBox="0 0 95 53"><defs><filter id="cb" x="-30%" y="-30%" width="160%" height="160%" color-interpolation-filters="sRGB"><feGaussianBlur stdDeviation="1.100"/></filter></defs>
   <rect width="95" height="53" fill="#0b0504"/>
   <g filter="url(#cb)">
    <path d="M0 0h72v8L40 14 0 10z" fill="#150807"/>
    <ellipse cx="66" cy="4" rx="3.500" ry="3" fill="#c8202a"/><ellipse cx="70" cy="9" rx="2" ry="2.500" fill="#a81a24"/>
    <path d="M72 0h23v19L80 14 72 8z" fill="#98641c"/>
    <path d="M70 13l24 6v4l-22-2z" fill="#0e0605"/>
    <path d="M68 22L95 20v12L72 34z" fill="#4a2e1e"/><path d="M70 26l22-2M72 31l20-3" stroke="#7a583e" stroke-width="1.200" stroke-dasharray="2 1.500"/>
    <ellipse cx="50" cy="24" rx="20" ry="18" fill="#3a1f14"/><ellipse cx="46" cy="14" rx="12" ry="6" fill="#2a120c"/><ellipse cx="54" cy="32" rx="10" ry="7" fill="#5a3220"/><ellipse cx="44" cy="38" rx="9" ry="5" fill="#4a2a1a"/><ellipse cx="60" cy="20" rx="6" ry="5" fill="#4e2c1c"/>
    <path d="M0 8Q6 2 20 3 30 4 32 12 38 14 37 22 34 32 30 42 28 50 24 53H0z" fill="#d2601a"/>
    <path d="M4 14q6-8 14-8 4 10 0 24-6 12-14 14z" fill="#e87c24"/><path d="M28 14q6 2 6 8-2 10-6 16-2-10 0-24z" fill="#e8741e"/>
    <path d="M22 6q3 10 0 26M30 12q-2 12-6 22" stroke="#8a300c" stroke-width="1.300" fill="none"/>
    <path d="M0 0h12L0 12z" fill="#7a240c"/>
   </g>
  </svg>
 </div>
 <div class="abs" style="left:361px;top:483.500px;width:22px;height:11px;background:rgba(0,0,0,.7)"></div>
 <div class="t" style="left:363.7px;top:482px;font-size:8.8px;line-height:14px;font-weight:bold;color:#fff;transform:scaleX(0.98);">0:38</div>

 <div class="abs" style="left:386px;top:442.500px;width:96px;height:54px;border:1px dashed #d0d0d0;border-left:none"></div>
 <svg class="abs" style="left:261px;top:522px" width="10" height="13" viewBox="0 0 10 13"><path d="M4.600 0h1.600c.5 2.200 3.500 2.600 3.800 5.800H8.800C8.200 4 7 3.400 6.200 3.200V10a3 2.700 0 1 1-1.600-2.400z" fill="#111"/></svg>
 <div class="abs" style="left:291.500px;top:496px;width:95.500px;height:72px;border-left:1px dashed #dcdcdc;border-right:1px dashed #dcdcdc"></div>
 <div class="abs" style="left:291.500px;top:511.500px;width:95.500px;height:33px;border:1px dashed #d0d0d0"></div>
 <div class="t" style="left:295.3px;top:520px;font-size:9.7px;line-height:15px;color:#555;transform:scaleX(0.94);">Sem přetáhněte audio</div>

 <div class="abs" style="left:291.500px;top:563px;width:95.500px;height:5.500px;border:1px solid #bdbdbd;border-top:none"></div>
 <div class="t" style="left:284px;top:569px;font-size:9px;line-height:14px;color:#666;transform:scaleX(0.96);">0:0</div>

 <div class="t" style="left:374px;top:569px;font-size:9px;line-height:14px;color:#666;transform:scaleX(0.94);">0:38.2</div>

 <!-- playhead -->
 <div class="abs" style="left:305.700px;top:439.300px;width:2.600px;height:130px;background:#0f6cbf"></div>
 <div class="abs" style="left:300px;top:459.500px;width:13.800px;height:16px;background:#2e70b6"></div>
 <svg class="abs" style="left:302.500px;top:462px" width="8.500" height="10.500" viewBox="0 0 8.500 10.500"><path d="M1.300 0l5.300 7.200M7.200 0L1.900 7.200" stroke="#dbe8f5" stroke-width="1.200" fill="none"/><circle cx="1.900" cy="8.600" r="1.400" fill="none" stroke="#dbe8f5" stroke-width="1"/><circle cx="6.600" cy="8.600" r="1.400" fill="none" stroke="#dbe8f5" stroke-width="1"/></svg>
 <div class="abs" style="left:292.500px;top:568px;width:26.500px;height:13px;background:#1e6fbe"></div>
 <div class="t" style="left:297px;top:568px;font-size:9px;line-height:14px;font-weight:bold;color:#fff;transform:scaleX(0.97);">0:05</div>

 <!-- zoom slider -->
 <svg class="abs" style="left:1025.500px;top:589px" width="86" height="13" viewBox="0 0 86 13"><circle cx="4.200" cy="5" r="3.400" fill="none" stroke="#8a8a8a" stroke-width="1.200"/><path d="M6.700 7.500l4 4" stroke="#8a8a8a" stroke-width="1.500"/><path d="M25 6.300h60.200" stroke="#444" stroke-width="1.500"/><circle cx="20.600" cy="6.300" r="4.100" fill="#fcfcfc" stroke="#8a8a8a" stroke-width="1.100"/></svg>
</div>

</div>
<div id="vscroll" class="abs">
 <div class="abs" style="left:1.500px;top:13.500px;width:10.500px;height:404.500px;background:#c1c1c1"></div>
 <svg class="abs" style="left:3px;top:5px" width="7" height="566" viewBox="0 0 7 566"><path d="M0 4L3.500 .5 7 4z" fill="#8b8b8b"/><path d="M0 561.500L3.500 565 7 561.500z" fill="#505050"/></svg>
</div>
<!-- cursor highlight -->
<div class="abs" style="left:1186px;top:452.500px;width:32px;height:32px;border-radius:50%;background:rgba(252,240,170,.85);border:1px solid rgba(236,214,120,.8)"></div>
<div id="taskbar" class="abs">
 <svg class="abs" style="left:0;top:0" width="1200" height="30" viewBox="0 645 1200 30">
  <defs><linearGradient id="tbg" x1="0" y1="0" x2="1" y2="0"><stop offset="0" stop-color="#6f9c2c"/><stop offset=".7" stop-color="#76a333"/><stop offset="1" stop-color="#78a436"/></linearGradient></defs>
  <rect x="0" y="645" width="1200" height="30" fill="url(#tbg)"/>
  <path d="M866 645q20 4 28 30h26q-6-20 2-30z" fill="#86b043" opacity=".55"/>
  <!-- windows logo -->
  <path d="M8.500 651.800l8.300-1.200v8.600H8.500zM17.800 650.400l11-1.600v10.400h-11zM8.500 660.200h8.300v8.600l-8.300-1.200zM17.800 660.200h11v10.400l-11-1.600z" fill="#fff"/>
  <!-- explorer -->
  <path d="M49 652.500q0-1.500 1.500-1.500h7l2 2h12q1.500 0 1.500 1.500V668H49z" fill="#e8c65a"/><rect x="50.500" y="654.500" width="21" height="10" fill="#fbeaa6"/><path d="M48 657.500h25l-1 11.500H49z" fill="#f5d876"/><path d="M53 664h15v6.500H53z" fill="#3f8fd8"/><path d="M55.500 666h10v4.500h-10z" fill="#8cc4f0"/>
  <!-- control panel -->
  <rect x="93.500" y="650.500" width="24.500" height="16" rx="1.500" fill="#39a2e0"/><rect x="95" y="652" width="21.500" height="13" fill="#57b8ee"/><circle cx="101" cy="657.500" r="3.600" fill="#f4f4f4"/><path d="M101 657.500v-3.600a3.600 3.600 0 0 1 3.600 3.600z" fill="#e8a23a"/><path d="M107 654.500h8M107 657.500h8M107 660.500h8" stroke="#e8f4fb" stroke-width="1.400"/><path d="M99 669.500q6.500-7 13 0z" fill="#cfd3d6"/><ellipse cx="105.500" cy="669.800" rx="7" ry="1.600" fill="#9aa0a4"/>
  <!-- vlc -->
  <path d="M150.800 648.500L157.500 666h-13.500z" fill="#f08a14"/><path d="M148.600 654.500h4.500l1.300 3.500h-7.100zM146.200 661h9.300l1.200 3.200h-11.700z" fill="#f6f6f6"/><path d="M141 666.500h19.800l1.200 4.500H139.800z" fill="#e87810"/>
  <!-- firefox -->
  <circle cx="197" cy="659.500" r="9.500" fill="#2f63b4"/><path d="M192 652q4-2 8 0 2 3 0 5-4 1-7-1z" fill="#5f9be0"/>
  <path d="M186.300 658q.5-5.500 4.200-8.300-.8 2.600.2 4.300 1.800-1 4.300-.6-2.300 1.600-1.700 3.700 1.800 1.500 4.700 1.200 2.600-.6 2.800-2.600 1.800 3.600-.8 6.600-3 2.800-7 1.800-3.800-1.400-4.700-5.300-1 .7-1.200 3.200-.9-2-.8-4z" fill="#f39a1e"/>
  <path d="M203 650.500q5 3.800 4.800 9.800-.8 7.300-7.800 10-6.500 1.800-11-2.500 6 2.600 10.500-1 4.500-4.300 3-10.300-.6-3.300.5-6z" fill="#e4581c"/>
  <path d="M186.300 660q1 6 6.500 9 5 2 9.500-.5-6 .8-9.500-2.500-3-2.800-6.500-6z" fill="#f7b61e"/>
  <!-- chrome button -->
  <rect x="221" y="645.500" width="43.500" height="29" fill="#a9c780" stroke="#c5dca4" stroke-width="1"/>
  <circle cx="242" cy="659.800" r="11.500" fill="#db4437"/><path d="M242 659.800L231.900 654.300A11.500 11.500 0 0 0 237 670.200z" fill="#0f9d58"/><path d="M242 659.800l-5 10.400a11.500 11.500 0 0 0 16.500-10.400 11.500 11.500 0 0 0-1.400-5.400H242z" fill="#ffcd40"/><path d="M231.900 654.300L242 659.800 247 670" fill="none"/><path d="M237 670.200l5-10.400-10.100-5.500a11.500 11.500 0 0 0 5.100 15.900z" fill="#0f9d58"/><circle cx="242" cy="659.800" r="5.300" fill="#f1f1f1"/><circle cx="242" cy="659.800" r="4.200" fill="#4285f4"/>
  <!-- word button -->
  <rect x="266.500" y="645.500" width="43.500" height="29" fill="#97b96a" stroke="#b5d08f" stroke-width="1"/>
  <rect x="286" y="650.500" width="13.500" height="18.500" fill="#fff" stroke="#2b579a" stroke-width="1"/><path d="M290 654.500h7.500M290 657.500h7.500M290 660.500h7.500M290 663.500h7.500M290 666.500h7.500" stroke="#2b579a" stroke-width="1"/><path d="M276.500 650.300l13.500-2.300v23.500l-13.500-2.300z" fill="#2b579a"/>
  <!-- tray: keyboard -->
  <rect x="986.500" y="652.500" width="23.500" height="15" rx="1.500" fill="none" stroke="#fff" stroke-width="1.300"/><path d="M989 656h19M989 659.500h19" stroke="#fff" stroke-width="1.500" stroke-dasharray="1.600 1"/><path d="M991 664h14.500" stroke="#fff" stroke-width="1.500"/>
  <path d="M1020 662l3.500-3.500 3.500 3.500z" fill="#fff"/>
  <path d="M1040.500 653.500v14" stroke="#fff" stroke-width="1.300"/><path d="M1041 654.500q3-1.500 5.500 0t5 0v6q-2.500 1.500-5 0t-5.500 0z" fill="#fff"/>
  <rect x="1062.500" y="654" width="7" height="13" rx="1" fill="none" stroke="#fff" stroke-width="1.200"/><rect x="1064.500" y="652.500" width="3" height="1.500" fill="#fff"/><rect x="1064" y="657" width="4" height="8.500" fill="#dfe8d2"/><path d="M1059.500 653v4.500M1058 654.500h3v2.500h-3zM1059.500 657.500v9" stroke="#fff" stroke-width="1" fill="none"/>
  <path d="M1076 667h2v-2h-2zM1078.800 667h2v-4.500h-2zM1081.600 667h2v-7.500h-2zM1084.400 667h2v-11h-2z" fill="#dfe8d2"/>
  <path d="M1095.500 658h2l3.500-4v13l-3.500-4h-2z" fill="#fff"/><circle cx="1103.500" cy="665" r="3.200" fill="#d8232a"/><path d="M1101.500 667l4-4" stroke="#fff" stroke-width="1"/>
 </svg>
 <div class="t" style="left:277.8px;top:7px;font-size:10.5px;line-height:16px;font-weight:bold;color:#fff;transform:scaleX(0.97);">W</div>

 <div class="t" style="left:1118px;top:9px;font-size:9.3px;line-height:14px;color:#fff;transform:scaleX(0.92);">CES</div>

 <div class="t" style="left:1157.5px;top:2px;font-size:9.3px;line-height:14px;color:#fff;transform:scaleX(0.97);">19:52</div>

 <div class="t" style="left:1146px;top:15px;font-size:9.3px;line-height:14px;color:#fff;transform:scaleX(0.93);">22. 3. 2017</div>

</div>

</body></html>
